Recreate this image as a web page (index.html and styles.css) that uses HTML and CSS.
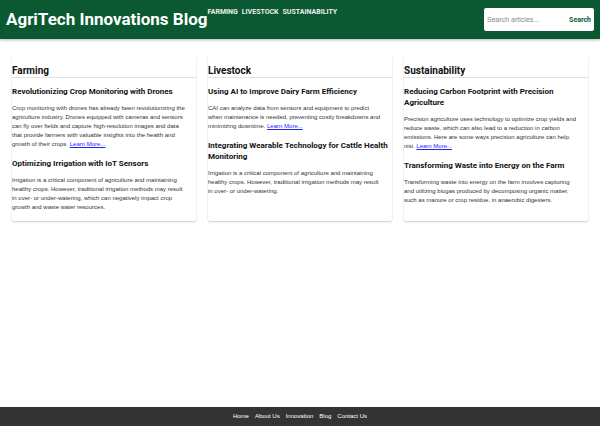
FILE: index.html
```html
<!DOCTYPE html>
<html lang="en">
<head>
<meta charset="utf-8">
<title>AgriTech Innovations Blog</title>
<link rel="stylesheet" href="styles.css">
</head>
<body>
<header class="site-header">
  <h1 class="brand">AgriTech Innovations Blog</h1>
  <nav class="main-nav">
    <a href="#farming">Farming</a>
    <a href="#livestock">Livestock</a>
    <a href="#sustainability">Sustainability</a>
  </nav>
  <form class="search">
    <input type="search" placeholder="Search articles..." aria-label="Search articles">
    <button type="submit">Search</button>
  </form>
</header>
<main class="columns">
  <section class="card" id="farming">
    <h2>Farming</h2>
    <article>
      <h3>Revolutionizing Crop Monitoring with Drones</h3>
      <p>Crop monitoring with drones has already been revolutionizing the agriculture industry. Drones equipped with cameras and sensors can fly over fields and capture high-resolution images and data that provide farmers with valuable insights into the health and growth of their crops. <a href="#farming">Learn More...</a></p>
    </article>
    <article>
      <h3>Optimizing Irrigation with IoT Sensors</h3>
      <p>Irrigation is a critical component of agriculture and maintaining healthy crops. However, traditional irrigation methods may result in over- or under-watering, which can negatively impact crop growth and waste water resources.</p>
    </article>
  </section>
  <section class="card" id="livestock">
    <h2>Livestock</h2>
    <article>
      <h3>Using AI to Improve Dairy Farm Efficiency</h3>
      <p>CAI can analyze data from sensors and equipment to predict when maintenance is needed, preventing costly breakdowns and minimizing downtime. <a href="#livestock">Learn More...</a></p>
    </article>
    <article>
      <h3>Integrating Wearable Technology for Cattle Health Monitoring</h3>
      <p>Irrigation is a critical component of agriculture and maintaining healthy crops. However, traditional irrigation methods may result in over- or under-watering.</p>
    </article>
  </section>
  <section class="card" id="sustainability">
    <h2>Sustainability</h2>
    <article>
      <h3>Reducing Carbon Footprint with Precision Agriculture</h3>
      <p>Precision agriculture uses technology to optimize crop yields and reduce waste, which can also lead to a reduction in carbon emissions. Here are some ways precision agriculture can help. nisi. <a href="#sustainability">Learn More...</a></p>
    </article>
    <article>
      <h3>Transforming Waste into Energy on the Farm</h3>
      <p>Transforming waste into energy on the farm involves capturing and utilizing biogas produced by decomposing organic matter, such as manure or crop residue, in anaerobic digesters.</p>
    </article>
  </section>
</main>
<footer class="site-footer">
  <a href="#home">Home</a>
  <a href="#about">About Us</a>
  <a href="#innovation">Innovation</a>
  <a href="#blog">Blog</a>
  <a href="#contact">Contact Us</a>
</footer>
</body>
</html>
```

FILE: styles.css
```css
* { box-sizing: border-box; }

body {
  margin: 0;
  min-height: 100vh;
  display: flex;
  flex-direction: column;
  background: #fff;
  color: #333;
  font-family: "Liberation Sans", Arial, sans-serif;
  font-size: 6px;
  line-height: 9px;
}

h1, h2, h3, p { margin: 0; }

h1, h2, h3,
.main-nav,
.search button { font-family: Roboto, "Liberation Sans", sans-serif; }

.site-header {
  display: flex;
  align-items: flex-start;
  padding: 8px 6px;
  background: #0b5932;
  box-shadow: 0 1px 3px rgba(0, 0, 0, 0.3);
}

.brand {
  color: #fff;
  font-size: 17px;
  line-height: 22px;
  white-space: nowrap;
}

.main-nav {
  display: flex;
  gap: 4px;
  font-size: 7px;
}

.main-nav a {
  color: #eee;
  font-weight: bold;
  text-decoration: none;
  text-transform: uppercase;
}

.search {
  display: flex;
  width: 110px;
  height: 23px;
  margin-left: auto;
  padding: 0 3px;
  background: #fff;
  border-radius: 2px;
}

.search input,
.search button {
  padding: 0;
  border: 0;
  background: none;
  font-size: 7px;
}

.search input {
  flex: 1;
  min-width: 0;
  outline: 0;
  font-family: inherit;
}

.search input::placeholder { color: #888; }

.search button {
  color: #0b5932;
  font-weight: bold;
}

.columns {
  flex: 1;
  display: grid;
  grid-template-columns: repeat(3, 1fr);
  align-content: start;
  gap: 12px;
  padding: 16px 12px;
}

.card {
  padding-top: 10px;
  border-radius: 2px;
  box-shadow: 0 1px 2px rgba(0, 0, 0, 0.2);
}

.card h2 {
  margin-bottom: 8px;
  border-bottom: 1px solid #e2e2e2;
  color: #111;
  font-size: 10px;
  line-height: 12px;
}

.card h3 {
  margin-bottom: 7px;
  color: #111;
  font-size: 8px;
  line-height: 11px;
}

.card p {
  margin-bottom: 9px;
  padding-right: 8px;
}

.card a { color: #22f; }

.site-footer {
  display: flex;
  justify-content: center;
  gap: 6px;
  padding: 5px;
  background: #333;
}

.site-footer a {
  color: #fff;
  text-decoration: none;
}
```
